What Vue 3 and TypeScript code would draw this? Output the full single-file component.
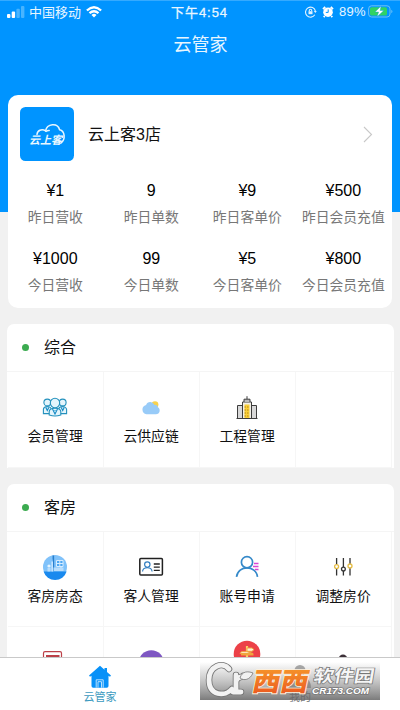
<script setup lang="ts">
interface Stat { value: string; label: string }
interface Entry { icon: string; label: string }

const stats: Stat[] = [
  { value: '¥1', label: '昨日营收' },
  { value: '9', label: '昨日单数' },
  { value: '¥9', label: '昨日客单价' },
  { value: '¥500', label: '昨日会员充值' },
  { value: '¥1000', label: '今日营收' },
  { value: '99', label: '今日单数' },
  { value: '¥5', label: '今日客单价' },
  { value: '¥800', label: '今日会员充值' },
]

const sections: { title: string; entries: Entry[] }[] = [
  {
    title: '综合',
    entries: [
      { icon: 'members', label: '会员管理' },
      { icon: 'cloud', label: '云供应链' },
      { icon: 'building', label: '工程管理' },
      { icon: '', label: '' },
    ],
  },
  {
    title: '客房',
    entries: [
      { icon: 'room', label: '客房房态' },
      { icon: 'idcard', label: '客人管理' },
      { icon: 'account', label: '账号申请' },
      { icon: 'sliders', label: '调整房价' },
      { icon: 'form', label: '' },
      { icon: 'purple', label: '' },
      { icon: 'signpost', label: '' },
      { icon: 'person', label: '' },
    ],
  },
]
</script>

<template>
  <div class="phone">
    <div class="scroll">
      <header class="hero">
        <div class="status">
          <svg class="signal" width="18" height="12" viewBox="0 0 18 12">
            <rect x="0" y="8" width="3.4" height="4" rx="1" fill="#fff" />
            <rect x="4.7" y="5.6" width="3.4" height="6.4" rx="1" fill="#fff" />
            <rect x="9.4" y="2.8" width="3.4" height="9.2" rx="1" fill="#48b4ff" />
            <rect x="14" y="0" width="3.4" height="12" rx="1" fill="#48b4ff" />
          </svg>
          <span class="carrier">中国移动</span>
          <svg class="wifi" width="16" height="12" viewBox="0 0 16 12" fill="none" stroke="#fff" stroke-width="2.3">
            <path d="M.9 4.5Q8-2 15.1 4.5" />
            <path d="M3.5 7.2Q8 3.2 12.5 7.2" />
            <path d="M5.5 8.9Q8 6.8 10.5 8.9L8 11.6Z" fill="#fff" stroke="none" />
          </svg>
          <span class="time">下午4:54</span>
          <svg class="lock" width="12" height="12" viewBox="0 0 12 12" fill="none" stroke="#dff1ff" stroke-width="1.1">
            <path d="M9.8 8.8A5 5 0 1 1 10.4 5" />
            <path d="M8.8 5h3l-1.5 2z" fill="#dff1ff" stroke="none" />
            <rect x="3.5" y="5.2" width="4" height="3" fill="#dff1ff" stroke="none" />
            <path d="M4.3 5.2V4.4a1.2 1.2 0 0 1 2.4 0v.8" />
          </svg>
          <svg class="alarm" width="12" height="12" viewBox="0 0 12 12">
            <circle cx="6" cy="6.2" r="4.8" fill="#fff" />
            <path d="M1 3.2 3.2.9M11 3.2 8.8.9M2.7 10l-1 1.2M9.3 10l1 1.2" stroke="#fff" stroke-width="1.8" />
            <path d="M6.2 3.4v3H3.8" fill="none" stroke="#0094ff" stroke-width="1" />
          </svg>
          <span class="percent">89%</span>
          <svg class="battery" width="25" height="13" viewBox="0 0 25 13">
            <rect x=".6" y=".8" width="21.4" height="11.2" rx="3" fill="none" stroke="#6dc1f6" />
            <rect x="2" y="2.2" width="17" height="8.4" rx="1.7" fill="#30d264" />
            <path d="M23.3 4.7c1.5.6 1.5 3 0 3.6z" fill="#6dc1f6" />
            <path d="M13.1 1 7 7h3.6l-1.5 4.8L15.8 5.5h-3.7z" fill="#fff" stroke="#0b9bdd" stroke-width=".4" />
          </svg>
        </div>
        <h1>云管家</h1>
      </header>

      <section class="store">
        <div class="store-head">
          <svg class="logo" width="54" height="54" viewBox="0 0 54 54">
            <rect width="54" height="54" rx="5.5" fill="#0094ff" />
            <g fill="none" stroke="#e9f7ff" stroke-width="1.5" stroke-linecap="round">
              <path d="M17 27.5c.2-3.8 4.6-6.4 8.6-3.6 1.4-7.5 12-8.5 14-1.2 5.2 1.2 6.4 9.2 1.2 13.6" />
              <path d="M26 24.3c1-.7 2-1 3.2-.8" />
            </g>
            <text x="9" y="36.7" class="logo-text">云上客</text>
          </svg>
          <span class="store-name">云上客3店</span>
          <svg class="chevron" width="10" height="17" viewBox="0 0 10 17"><path d="m1 1 7.5 7.5L1 16" fill="none" stroke="#c8c8c8" stroke-width="1.1" /></svg>
        </div>
        <div class="stats">
          <div v-for="s in stats" :key="s.label" class="stat">
            <b>{{ s.value }}</b>
            <span>{{ s.label }}</span>
          </div>
        </div>
      </section>

      <section v-for="sec in sections" :key="sec.title" class="group">
        <div class="group-head"><i class="dot"></i><h2>{{ sec.title }}</h2></div>
        <div class="cells">
          <div v-for="(e, i) in sec.entries" :key="i" class="cell">
            <svg class="icon" width="28" height="28" viewBox="0 0 28 28">
              <g v-if="e.icon === 'members'" fill="#e4f5fc" stroke="#2491bd" stroke-width="1.1">
                <circle cx="6.3" cy="9.5" r="3.4" /><circle cx="21.7" cy="9.5" r="3.4" />
                <path d="M2.4 20.6v-4c0-2 2-3 4-3s4 1.3 4 3v4zM17.6 20.6v-4c0-2 2-3 4-3s4 1.3 4 3v4z" />
                <path d="M8.2 22v-3.2c0-2.4 2.5-3.5 5.8-3.5s5.8 1.1 5.8 3.5V22q-5.8 2-11.6 0z" />
                <circle cx="14" cy="10" r="4.7" />
                <path d="m11.5 16 2.5 5 2.5-5M13.5 17.5h1M4.8 14.5l1.5 3 1.5-3M20.2 14.5l1.5 3 1.5-3" fill="none" stroke="#158ac5" />
              </g>
              <g v-else-if="e.icon === 'cloud'">
                <circle cx="18" cy="11.6" r="3.4" fill="#f8d24e" />
                <path d="M9.5 21.3a4.8 4.8 0 0 1-.4-9.4c1-3.6 6.5-4 8.1-.2 2.5-.3 3.5 1.2 3.7 2.6 3 1.7 2.2 7-2 7z" fill="#98cbf8" />
              </g>
              <g v-else-if="e.icon === 'building'" stroke="#3d3d3d" stroke-width="1">
                <path d="M4.5 25.5v-13h5v13zM18.5 25.5v-13h5v13z" fill="#d8d8d8" />
                <path d="M9.5 25.5V9h9v16.5z" fill="#f2f0e8" />
                <path d="M11 9V6.2h6V9M14 6V3.2" fill="#bbb" />
                <path d="M11.5 11.5h5V25h-5z" fill="#f9cf36" stroke="none" />
                <path d="M11.5 14h5M11.5 17h5M11.5 20h5M11.5 23h5" stroke="#b9881d" stroke-dasharray="1.5 1" />
                <path d="M3.5 25.5h21" />
              </g>
              <g v-else-if="e.icon === 'room'">
                <circle cx="14" cy="14" r="12" fill="#80c2fa" />
                <path d="M2.6 18.5h23A12 12 0 0 1 2.6 18.5z" fill="#1989ee" />
                <path d="M12.5 2.5V18M12.2 2.5v4" stroke="#287fce" stroke-width="1.3" />
                <path d="M11.2 8.5v10M20 13.5v4.5" stroke="#c5e4ff" stroke-width="1.6" />
                <path d="M6.5 15h3v3.5h-3zM12.5 14.5h10v3.5h-10z" fill="#b8ddfc" />
                <path d="M15.5 7.5h6.5v6h-6.5zM18.8 7.5v6M15.5 10.5h6.5" fill="#4da7f3" stroke="#d5ecff" />
                <circle cx="8" cy="13" r="1.6" fill="#e4f4ff" />
              </g>
              <g v-else-if="e.icon === 'idcard'" fill="none" stroke="#202020" stroke-width="1.5">
                <rect x="2.8" y="5.6" width="22.6" height="16.4" rx="1" />
                <circle cx="10.3" cy="11.6" r="2.7" stroke="#347fc1" stroke-width="1.2" />
                <path d="M5.5 18.5c.5-5 9.1-5 9.6 0" stroke="#347fc1" stroke-width="1.2" />
                <path d="M16.8 11h6M16.8 14.2h6M16.8 17.4h6" stroke-width="1.3" />
              </g>
              <g v-else-if="e.icon === 'account'" fill="none" stroke="#3589c9" stroke-width="1.7">
                <circle cx="14" cy="9.2" r="5.6" />
                <path d="M3.5 23.8c1.5-12 19.5-12 21 0" />
                <path d="M21 10.5h4.5M20 13.5h5.5M22 16.5h3.5" stroke="#d946d4" stroke-width="1.4" />
              </g>
              <g v-else-if="e.icon === 'sliders'" fill="#fff" stroke="#333" stroke-width="1.3">
                <path d="M7.6 5v17.5M14.4 5v17.5M21 5v17.5" />
                <circle cx="7.6" cy="13.6" r="2" stroke="#e5bd45" /><circle cx="14.4" cy="16" r="1.9" /><circle cx="21" cy="13" r="2" stroke="#e5bd45" />
              </g>
              <g v-else-if="e.icon === 'form'" fill="none" stroke="#bc4048">
                <rect x="2.5" y="3.7" width="18" height="22" rx="1.5" stroke-width="1.2" />
                <path d="M5 8h13.5" stroke-width="2" />
              </g>
              <circle v-else-if="e.icon === 'purple'" cx="14.3" cy="14.7" r="12.5" fill="#7e57c2" />
              <circle v-else-if="e.icon === 'person'" cx="14" cy="10.7" r="4.2" fill="#3d3038" />
              <g v-else-if="e.icon === 'signpost'" transform="translate(0 -8)">
                <circle cx="14" cy="14" r="13.3" fill="#ec4148" />
                <path d="M14 6v20" stroke="#f9cf67" stroke-width="2.2" />
                <path d="M14 8h5l2 1.7-2 1.6h-5zM20 13.5H9l-2-.1 1.5-1.7H14z" fill="#fff0d8" stroke="#f0a53d" />
                <path d="M8 14.5h12.5" stroke="#f0a53d" stroke-width="2" />
              </g>
            </svg>
            <span>{{ e.label }}</span>
          </div>
        </div>
      </section>
    </div>

    <nav class="tabs">
      <div class="tab active">
        <svg width="24" height="24" viewBox="0 0 24 24">
          <path d="M12 .8 1 10.5l1 1.2 1.5-1V21q0 1.7 1.7 1.7h13.6q1.7 0 1.7-1.7V10.7l1.5 1 1-1.2-4-3.5V3h-2.5v1.8z" fill="#0791f8" />
          <path d="M8.2 22.7v-7.9h7v7.9M10 22.7v-6h3.5v6" fill="none" stroke="#c9eaff" stroke-width=".9" />
        </svg>
        <span>云管家</span>
      </div>
      <div class="tab mine">
        <svg width="24" height="24" viewBox="0 0 24 24"><circle cx="12" cy="5.5" r="5.5" fill="#aaa" /><path d="M1 23q0-11 11-11t11 11z" fill="#aaa" /></svg>
        <span>我的</span>
      </div>
    </nav>

    <svg class="watermark" width="180" height="38" viewBox="0 0 180 38">
      <defs>
        <linearGradient id="shade" x2="0" y2="1"><stop offset="0" stop-color="#777" stop-opacity="0" /><stop offset=".5" stop-color="#777" stop-opacity=".42" /><stop offset="1" stop-color="#666" stop-opacity=".86" /></linearGradient>
        <linearGradient id="orange" x2="0" y2="1"><stop offset="0" stop-color="#f9a52d" /><stop offset="1" stop-color="#e9501e" /></linearGradient>
      </defs>
      <rect width="180" height="38" fill="url(#shade)" />
      <g fill="none" stroke-linecap="round">
        <g stroke="#777" stroke-width="6.5"><path d="M29 7C23-1 9 4 9 18c0 16 16 17 23 9" /><path d="M36 13v17M33 30h8M36 19c2-5 5-3 7-5" /></g>
        <g stroke="#f2f2f2" stroke-width="4.8"><path d="M29 7C23-1 9 4 9 18c0 16 16 17 23 9" /><path d="M36 13v17M33 30h8M36 19c2-5 5-3 7-5" /></g>
      </g>
      <path d="M40 16c2-7 8-7 13-5-3 7-9 8-13 5z" fill="#f2f2f2" stroke="#777" stroke-width=".8" />
      <text transform="translate(51 29) skewX(-12) scale(1.12 1.04)" class="west">西西</text>
      <text transform="translate(113 20) skewX(-10) scale(1.12 .94)" class="garden">软件园</text>
      <text x="112" y="32" class="domain" textLength="57" lengthAdjust="spacingAndGlyphs">CR173.COM</text>
    </svg>
  </div>
</template>

<style>
body { overflow: hidden; }
</style>

<style scoped>
* { box-sizing: border-box; }
.phone { position: relative; width: 400px; height: 710px; overflow: hidden; background: #f1f1f1; font-family: "Liberation Sans", "Noto Sans CJK SC", sans-serif; color: #111; display: flex; flex-direction: column; }
.scroll { height: 657px; overflow: hidden; flex: none; }
.hero { height: 212px; background: #0094ff; border-top: 1px solid #35aaff; color: #fff; }
.status { height: 21px; display: flex; align-items: center; padding-left: 7px; font-size: 13px; color: #e8f6ff; white-space: nowrap; }
.carrier { margin-left: 4px; width: 53px; }
.wifi { margin-left: 4px; }
.time { margin-left: 69px; width: 60px; font-size: 13px; letter-spacing: .95px; -webkit-text-stroke: .3px; }
.lock { margin-left: 74px; }
.alarm { margin-left: 5px; }
.percent { margin-left: 5px; width: 28px; font-size: 13px; letter-spacing: .3px; }
.battery { margin-left: 1px; }
h1 { margin: 9px 0 0; height: 28px; line-height: 28px; text-align: center; font-size: 18px; font-weight: 400; color: #e8f6ff; padding-left: 1px; }
.store { height: 213px; width: 384px; margin: -117px 0 0 7.7px; background: #fff; border-radius: 10px; }
.store-head { height: 78px; padding: 0 19px 0 12.8px; display: flex; align-items: center; }
.logo-text { font: italic 700 11px "Noto Sans CJK SC", sans-serif; fill: #e9f7ff; }
.store-name { margin: -2px 0 0 13.5px; flex: 1; font-size: 16px; }
.stats { display: grid; grid-template-columns: repeat(4, 96px); grid-auto-rows: 68px; margin-left: -.4px; }
.stat { display: flex; flex-direction: column; align-items: center; padding-top: 7px; white-space: nowrap; }
.stat b { font-weight: 400; font-size: 16px; line-height: 22px; color: #000; }
.stat span { font-size: 13.8px; line-height: 20px; margin-top: 5.5px; color: #777; }
.group { margin: 16px 0 0 7px; width: 387px; background: #fff; border-radius: 7px 7px 0 0; }
.group-head { height: 48px; border-bottom: 1px solid #f5f5f5; display: flex; align-items: center; padding-left: 15px; }
.dot { width: 7px; height: 7px; border-radius: 50%; background: #3cab50; }
h2 { margin: 1px 0 0 15px; font-size: 16px; line-height: 24px; font-weight: 400; }
.cells { display: grid; grid-template-columns: repeat(4, 96px); padding-left: .6px; }
.cell { height: 95.5px; border-right: 1px solid #f6f6f6; border-bottom: 1px solid #f6f6f6; display: flex; flex-direction: column; align-items: center; padding-top: 21px; }
.icon { overflow: visible; flex: none; }
.cell span { height: 20px; line-height: 20px; margin-top: 6px; font-size: 13.8px; }
.tabs { flex: 1; background: #fff; border-top: 1px solid #c9c9c9; display: grid; grid-template-columns: 1fr 1fr; }
.tab { display: flex; flex-direction: column; align-items: center; padding-top: 7px; font-size: 11px; line-height: 16px; color: #3b9ac0; }
.mine { color: #777; }
.watermark { position: absolute; left: 200px; top: 662px; overflow: visible; }
.west { font: 900 25px "Noto Sans CJK SC", sans-serif; fill: url(#orange); stroke: #fff1dc; stroke-width: 1.6px; paint-order: stroke; }
.garden { font: 700 18px "Noto Sans CJK SC", sans-serif; fill: #f5f5f5; stroke: #777; stroke-width: 1.5px; paint-order: stroke; }
.domain { font: italic 700 9.5px "Liberation Sans", sans-serif; fill: #fff; stroke: #777; stroke-width: 1.5px; paint-order: stroke; }
</style>
